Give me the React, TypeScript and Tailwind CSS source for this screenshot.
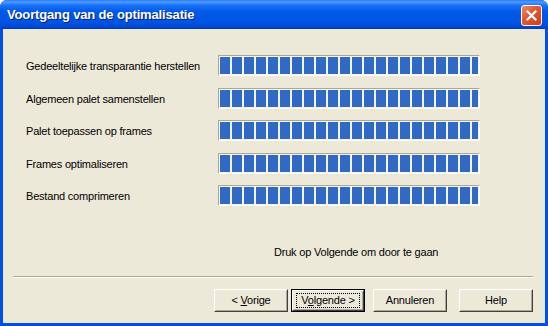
import React from "react";

const rows = [
  "Gedeeltelijke transparantie herstellen",
  "Algemeen palet samenstellen",
  "Palet toepassen op frames",
  "Frames optimaliseren",
  "Bestand comprimeren",
];

function Bar() {
  return (
    <div className="w-[262px] h-[21px] border border-t-[#aca899] border-l-[#aca899] border-b-white border-r-white bg-[#f5f4ef] px-[1px] py-[1px]">
      <div className="h-full w-full overflow-hidden flex gap-[2px]">
        {Array.from({ length: 22 }).map((_, i) => (
          <div key={i} className="w-[10px] h-full shrink-0 bg-[#316ac5]" />
        ))}
      </div>
    </div>
  );
}

function Btn({ children, def }: { children: React.ReactNode; def?: boolean }) {
  return (
    <div
      className={
        "h-[23px] w-[74px] shrink-0 " +
        (def ? "border border-black" : "")
      }
    >
      <div className="h-full w-full border border-t-white border-l-white border-b-[#404040] border-r-[#404040] bg-[#ece9d8]">
        <div className="h-full w-full border border-t-[#ece9d8] border-l-[#ece9d8] border-b-[#aca899] border-r-[#aca899] flex items-center justify-center">
          {def ? (
            <div className="self-stretch flex-1 mx-[2px] my-[1px] border border-dotted border-black flex items-center justify-center">
              <span className="whitespace-pre">{children}</span>
            </div>
          ) : (
            <span className="whitespace-pre">{children}</span>
          )}
        </div>
      </div>
    </div>
  );
}

export default function App() {
  return (
    <div className="w-[548px] h-[326px] flex flex-col bg-[#0050e6] rounded-t-[7px] overflow-hidden font-['Liberation_Sans',Arial,sans-serif] text-[11px] tracking-[-0.2px] text-black">
      <div className="h-[29px] shrink-0 flex items-center justify-between pl-[7px] pr-[6px] bg-[linear-gradient(to_bottom,#2a7bf5_0%,#4d9bff_7%,#1a72f8_18%,#0059e8_40%,#0055e4_75%,#0049d4_92%,#003cc0_100%)]">
        <span className="text-white font-bold text-[13px] tracking-[-0.15px] [text-shadow:1px_1px_0_#0a1f7a] mt-[1px]">
          Voortgang van de optimalisatie
        </span>
        <div className="w-[21px] h-[21px] mt-[2px] rounded-[3px] border border-white bg-[linear-gradient(135deg,#f08a6a_0%,#e25a35_40%,#cf3e17_100%)] flex items-center justify-center">
          <svg width="13" height="13" viewBox="0 0 13 13">
            <path d="M2.5 2.5 L10.5 10.5 M10.5 2.5 L2.5 10.5" stroke="white" strokeWidth="2.2" strokeLinecap="square" />
          </svg>
        </div>
      </div>
      <div className="flex-1 mx-[3px] mb-[3px] bg-[#ece9d8] flex flex-col">
        <div className="flex flex-col pt-[26px] pl-[23px] gap-[11.5px]">
          {rows.map((r) => (
            <div key={r} className="flex items-center">
              <div className="w-[192px] pt-[2px]">{r}</div>
              <Bar />
            </div>
          ))}
        </div>
        <div className="mt-[40px] pl-[271px] leading-[13px]">Druk op Volgende om door te gaan</div>
        <div className="mt-[17px] ml-[10px] w-[520px] border-t border-t-[#aca899] border-b border-b-white" />
        <div className="mt-[11px] flex pl-[211px]">
          <Btn>
            {"< "}<span className="underline">V</span>orige
          </Btn>
          <div className="w-[3px]" />
          <Btn def>
            V<span className="underline">o</span>lgende {">"}
          </Btn>
          <div className="w-[8px]" />
          <Btn>Annuleren</Btn>
          <div className="w-[12px]" />
          <Btn>Help</Btn>
        </div>
      </div>
    </div>
  );
}
